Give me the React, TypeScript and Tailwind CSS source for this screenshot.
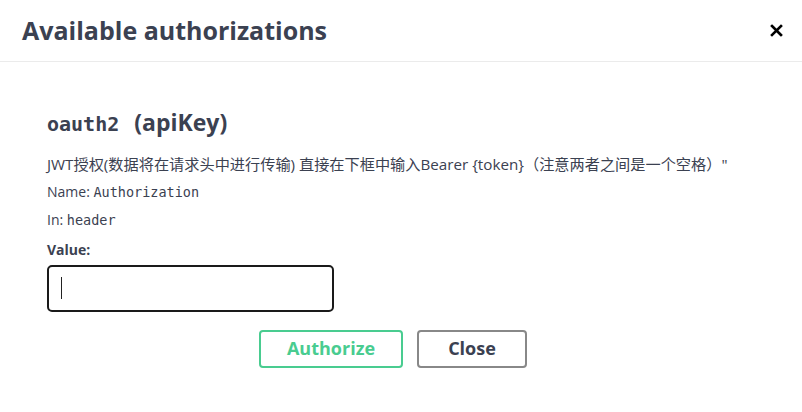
export default function App() {
  return (
    <div className="h-[412px] w-[802px] bg-white font-['Open_Sans',sans-serif] text-[#3b4151]">
      <div className="flex h-[62px] items-center justify-between border-b border-[#ebebeb] pl-[22px] pr-[14px]">
        <h3 className="text-[25px] font-bold leading-none">Available authorizations</h3>
        <button className="flex h-6 w-6 items-center justify-center">
          <svg width="13" height="13" viewBox="0 0 13 13">
            <path d="M2 2 L11 11 M11 2 L2 11" stroke="#000" strokeWidth="2.6" strokeLinecap="square" />
          </svg>
        </button>
      </div>

      <div className="px-[47px] pt-[43px]">
        <h4 className="flex items-baseline gap-[15px] font-bold">
          <code className="font-['DejaVu_Sans_Mono',monospace] text-[20px] font-semibold">oauth2</code>
          <span className="text-[23px]">(apiKey)</span>
        </h4>

        <div className="mt-[11px] text-[14px] leading-[27px]">
          <p className="font-['Open_Sans','Noto_Sans_CJK_SC',sans-serif] text-[15.2px]">
            JWT授权(数据将在请求头中进行传输) 直接在下框中输入Bearer {'{token}'}（注意两者之间是一个空格）"
          </p>
          <p>
            Name: <code className="font-['DejaVu_Sans_Mono',monospace] text-[13.5px]">Authorization</code>
          </p>
          <p>
            In: <code className="font-['DejaVu_Sans_Mono',monospace] text-[13.5px]">header</code>
          </p>
        </div>

        <label className="mt-[5px] block text-[14px] font-bold">Value:</label>
        <div className="mt-[5px] flex h-[47px] w-[287px] items-center rounded-[5px] border-2 border-[#1a1a1a] px-[12px]">
          <span className="h-[22px] w-px bg-[#222]" />
        </div>
      </div>

      <div className="flex justify-start gap-[14px] pl-[259px] pt-[18px]">
        <button className="h-[38px] w-[144px] rounded-[4px] border-2 border-[#49cc90] text-[18px] font-bold text-[#49cc90]">
          Authorize
        </button>
        <button className="h-[38px] w-[110px] rounded-[4px] border-2 border-[#888] text-[18px] font-bold text-[#3b4151]">
          Close
        </button>
      </div>
    </div>
  )
}
